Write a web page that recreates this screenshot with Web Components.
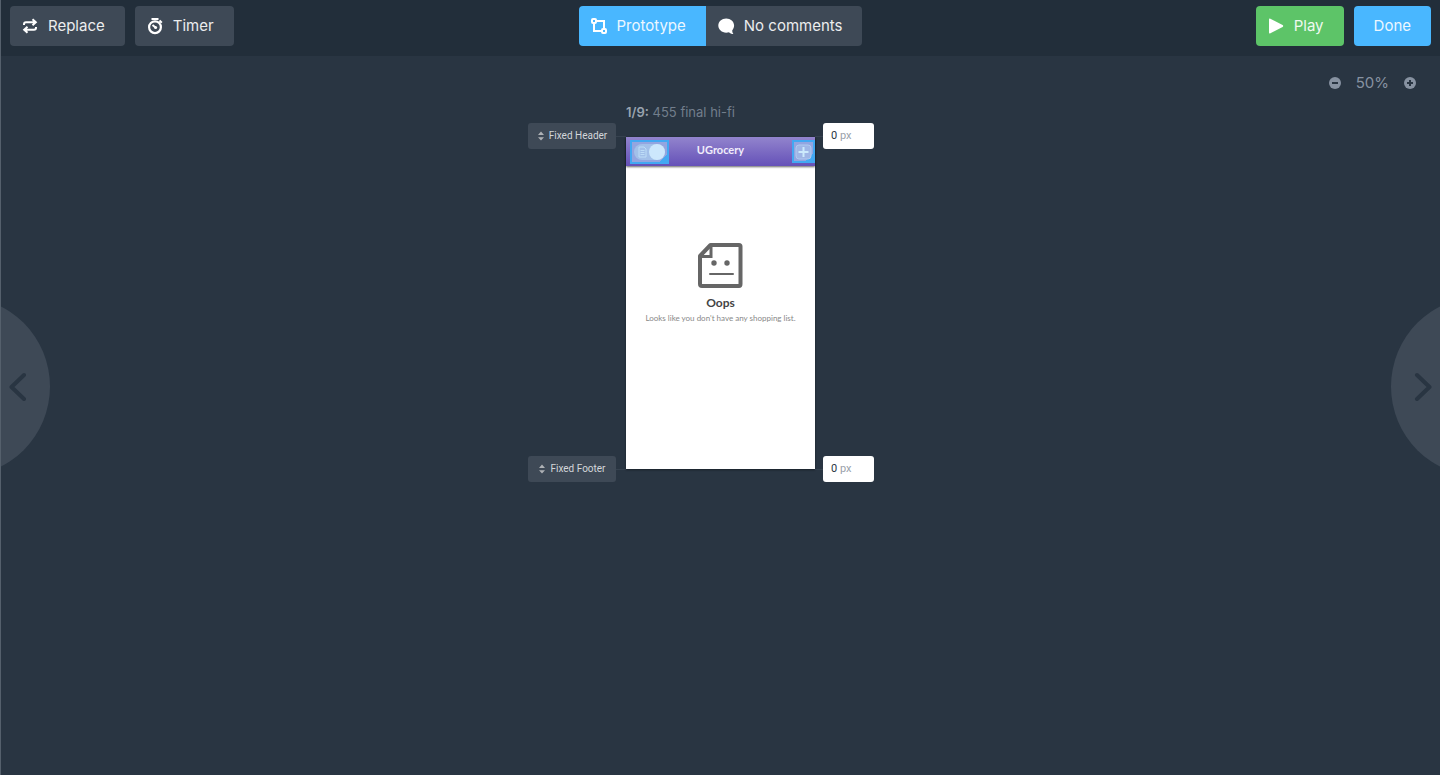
<!DOCTYPE html>
<html lang="en">
<head>
<meta charset="utf-8">
<meta name="viewport" content="width=device-width, initial-scale=1">
<title>455 final hi-fi</title>
<style>
    * { box-sizing: border-box; }
    body {
        margin: 0;
        background: #293542;
        font-family: Inter, sans-serif;
        --panel: #3e4956;
        --blue: #49b7ff;
        --green: #5dc468;
        --muted: #8792a1;
    }
</style>
</head>
<body>
<prototype-editor></prototype-editor>

<script>
const ICONS = {
    replace: '<path d="M2 7V6.2Q2 4.2 4 4.2H13M10.5 1.2L13.8 4.2L10.5 7.2M14 9V9.8Q14 11.8 12 11.8H3M5.5 8.8L2.2 11.8L5.5 14.8" fill="none" stroke="currentColor" stroke-width="2"/>',
    timer: '<circle cx="8" cy="9.2" r="5.9" fill="none" stroke="currentColor" stroke-width="2.2"/><path d="M4.5 1H11.5M12.5 2.5L14.8 4.8M5.5 7L8.5 9.5" fill="none" stroke="currentColor" stroke-width="2"/><circle cx="8.6" cy="9.6" r="1.5" fill="currentColor"/>',
    flow: '<path d="M5 3H13V11M3 5V13H11" fill="none" stroke="currentColor" stroke-width="2"/><rect x="1" y="1" width="4" height="4" rx="1" fill="none" stroke="currentColor" stroke-width="2"/><rect x="11" y="11" width="4" height="4" rx="1" fill="none" stroke="currentColor" stroke-width="2"/>',
    comment: '<path d="M8.2 0.5C3.8 0.5 0.3 3.6 0.3 7.6S3.8 14.7 8.2 14.7C9.2 14.7 10.2 14.5 11 14.2C12 15.4 13.5 16 15.4 16C14.6 15 14.3 13.8 14.2 12.4C15.4 11.1 16.1 9.4 16.1 7.6C16.1 3.6 12.6 0.5 8.2 0.5Z" fill="currentColor"/>',
    play: '<path d="M1 1.5V14.5Q1 16 2.4 15.3L14.6 9Q15.8 8 14.6 7L2.4 0.7Q1 0 1 1.5Z" fill="currentColor"/>',
    sort: '<path d="M1 6.5L5 2L9 6.5ZM1 9.5L5 14L9 9.5Z" fill="currentColor"/>'
};

const icon = (name, w = 16, box = '0 0 16 16') =>
    `<svg width="${w}" height="16" viewBox="${box}" aria-hidden="true">${ICONS[name]}</svg>`;

function define(name, render) {
    customElements.define(name, class extends HTMLElement {
        constructor() {
            super();
            this.attachShadow({ mode: 'open' });
        }

        connectedCallback() {
            this.shadowRoot.innerHTML = render(this);
        }
    });
}

define('tool-button', el => `
    <style>
        :host { display: block; }
        button {
            display: flex;
            align-items: center;
            gap: 10px;
            height: 40px;
            margin: 0;
            padding: 0 20px ${el.hasAttribute('icon') ? '0 12px' : ''};
            border: 0;
            border-radius: var(--corners, 4px);
            background: var(--fill, var(--panel));
            color: #fff;
            font: 15px/24px Inter, sans-serif;
            white-space: nowrap;
            cursor: pointer;
        }
        span { opacity: 0.9; }
        svg { flex: none; overflow: visible; }
    </style>
    <button type="button">
        ${el.hasAttribute('icon') ? icon(el.getAttribute('icon')) : ''}
        <span><slot></slot></span>
    </button>
`);

define('tool-bar', () => `
    <style>
        :host {
            display: grid;
            grid-template-columns: 1fr auto 1fr;
            padding: 6px 9px 10px;
            background: #222e3a;
        }
        div { display: flex; gap: 10px; }
        .tabs { gap: 0; }
        .end { justify-content: flex-end; }
        .proto { --fill: var(--blue); --corners: 4px 0 0 4px; }
        .comments { --corners: 0 4px 4px 0; }
        .play { --fill: var(--green); }
        .done { --fill: var(--blue); }
    </style>
    <div>
        <tool-button icon="replace">Replace</tool-button>
        <tool-button icon="timer">Timer</tool-button>
    </div>
    <div class="tabs">
        <tool-button class="proto" icon="flow">Prototype</tool-button>
        <tool-button class="comments" icon="comment">No comments</tool-button>
    </div>
    <div class="end">
        <tool-button class="play" icon="play">Play</tool-button>
        <tool-button class="done">Done</tool-button>
    </div>
`);

define('zoom-control', () => `
    <style>
        :host {
            display: flex;
            justify-content: flex-end;
            align-items: center;
            gap: 15px;
            padding: 15px 24px 7px;
            color: var(--muted);
            font-size: 15px;
            line-height: 24px;
        }
        button { display: flex; margin: 0; padding: 0; border: 0; background: none; color: inherit; cursor: pointer; }
    </style>
    <button type="button" aria-label="Zoom out">
        <svg width="12" height="12" viewBox="0 0 12 12"><circle cx="6" cy="6" r="6" fill="currentColor"/><path d="M3 6H9" stroke="#293542" stroke-width="2"/></svg>
    </button>
    <span>50%</span>
    <button type="button" aria-label="Zoom in">
        <svg width="12" height="12" viewBox="0 0 12 12"><circle cx="6" cy="6" r="6" fill="currentColor"/><path d="M3 6H9M6 3V9" stroke="#293542" stroke-width="2"/></svg>
    </button>
`);

define('fixed-handle', () => `
    <style>
        :host { display: flex; align-items: center; }
        :host::after { content: ""; width: 10px; height: 1px; background: #36424f; }
        button {
            display: flex;
            align-items: center;
            justify-content: center;
            gap: 4px;
            width: 88px;
            height: 26px;
            margin: 0;
            padding: 0;
            border: 0;
            border-radius: 3px;
            background: var(--panel);
            color: #d3d6da;
            font: 10px/16px Roboto, sans-serif;
            white-space: nowrap;
            cursor: ns-resize;
        }
        svg { color: #aeb1b5; height: 12px; }
    </style>
    <button type="button">${icon('sort', 8, '0 0 10 16')}<span><slot></slot></span></button>
`);

define('px-field', el => `
    <style>
        :host { display: flex; align-items: center; }
        :host::before { content: ""; width: 8px; height: 1px; background: #36424f; }
        label {
            display: flex;
            align-items: center;
            gap: 2px;
            box-sizing: border-box;
            width: 51px;
            height: 26px;
            padding: 0 8px;
            border-radius: 3px;
            background: #fff;
            color: #9aa1aa;
            font: 11px/16px Roboto, sans-serif;
        }
        input {
            width: 7px;
            margin: 0;
            padding: 0;
            border: 0;
            outline: 0;
            background: none;
            color: #293542;
            font: inherit;
        }
    </style>
    <label><input type="text" inputmode="numeric" value="0" aria-label="${el.getAttribute('label')}"><span>px</span></label>
`);

define('hot-spot', el => `
    <style>
        :host { display: block; }
        button {
            display: flex;
            align-items: center;
            justify-content: center;
            width: 100%;
            height: 100%;
            margin: 0;
            padding: 0;
            border: 2px solid #42a8f2;
            background: linear-gradient(135deg, transparent calc(100% - 5px), #42a8f2 calc(100% - 5px)), #93a5e0;
            cursor: pointer;
        }
        svg { flex: none; }
    </style>
    <button type="button" aria-label="${el.getAttribute('label')}"><slot></slot></button>
`);

define('app-screen', () => `
    <style>
        :host {
            display: block;
            height: 332px;
            background: #fff;
            box-shadow: 0 1px 2px rgba(0, 0, 0, 0.4);
            color: #444;
            font-family: Lato, sans-serif;
            text-align: center;
        }
        header {
            display: grid;
            grid-template-columns: 1fr auto 1fr;
            align-items: start;
            height: 29px;
            padding-top: 3px;
            box-sizing: border-box;
            background: linear-gradient(#9284cd, #6551b8);
            box-shadow: 0 1px 2px rgba(0, 0, 0, 0.6);
            color: #f1edfb;
            font-size: 11px;
            font-weight: 700;
            line-height: 20px;
        }
        .lists { width: 39px; height: 24px; margin-left: 4px; }
        .add { width: 23px; height: 23px; justify-self: end; }
        main { padding-top: 76px; }
        main svg { display: block; margin: 0 auto 6px; }
        h1 { margin: 0; font-size: 12px; line-height: 18px; font-weight: 700; }
        p { margin: 0; color: #888; font-size: 8px; line-height: 12px; white-space: nowrap; }
    </style>
    <header>
        <hot-spot class="lists" label="Toggle lists">
            <svg width="33" height="18" viewBox="0 0 33 18">
                <rect x="1" y="1" width="31" height="16" rx="8" fill="#a2c0e9"/>
                <path d="M6 4H11L13 6V14H6ZM7.5 7.5H11.5M7.5 9.5H11.5M7.5 11.5H11.5" fill="none" stroke="#bdddf7"/>
                <circle cx="24" cy="9" r="8" fill="#cce7fc"/>
            </svg>
        </hot-spot>
        <span>UGrocery</span>
        <hot-spot class="add" label="Add list">
            <svg width="17" height="16" viewBox="0 0 17 16">
                <rect x="1" y="1" width="15" height="14" rx="3" fill="#9fb6e6" stroke="#afcaf0"/>
                <path d="M8.5 3V13M3.5 8H13.5" stroke="#cceafc" stroke-width="2"/>
            </svg>
        </hot-spot>
    </header>
    <main>
        <svg width="45" height="46" viewBox="0 0 45 46" fill="none" stroke="#666">
            <path d="M12.5 3H41Q42.5 3 42.5 4.5V42Q42.5 44 41 44H4Q2 44 2 42V14Z" stroke-width="4" stroke-linejoin="round"/>
            <path d="M13 3V14.5H2" stroke-width="3"/>
            <path d="M12 32H35" stroke-width="2" stroke-linecap="round"/>
            <circle cx="16" cy="21" r="2.7" fill="#666" stroke="none"/>
            <circle cx="29" cy="21" r="2.7" fill="#666" stroke="none"/>
        </svg>
        <h1>Oops</h1>
        <p>Looks like you don't have any shopping list.</p>
    </main>
`);

define('page-arrow', el => `
    <style>
        :host { display: block; position: absolute; top: calc(50% - 91px); }
        :host([side="prev"]) { left: 0; }
        :host([side="next"]) { right: 0; transform: scaleX(-1); }
        button {
            display: flex;
            align-items: center;
            width: 50px;
            height: 180px;
            margin: 0;
            padding: 0 8px;
            border: 0;
            background: var(--panel);
            clip-path: circle(90px at -41px 50%);
            cursor: pointer;
        }
    </style>
    <button type="button" aria-label="${el.getAttribute('side') === 'prev' ? 'Previous screen' : 'Next screen'}">
        <svg width="18" height="30" viewBox="0 0 18 30"><path d="M15 3L2.5 15L15 27" fill="none" stroke="#293542" stroke-width="4" stroke-linecap="round" stroke-linejoin="round"/></svg>
    </button>
`);

define('proto-stage', () => `
    <style>
        :host {
            display: grid;
            grid-template-columns: 1fr 189px 1fr;
        }
        h2 {
            grid-column: 2;
            margin: 0 0 15px;
            color: #727e8c;
            font-size: 13px;
            line-height: 20px;
            font-weight: 400;
            white-space: nowrap;
        }
        strong { color: #9aa4b0; font-weight: 600; }
        /* handles are centred on the top and bottom edges of the screen */
        .rail {
            display: flex;
            flex-direction: column;
            justify-content: space-between;
            margin: -14px 0 -13px;
        }
        .start { grid-column: 1; align-items: flex-end; }
    </style>
    <h2><strong>1/9:</strong> 455 final hi-fi</h2>
    <div class="rail start">
        <fixed-handle>Fixed Header</fixed-handle>
        <fixed-handle>Fixed Footer</fixed-handle>
    </div>
    <app-screen></app-screen>
    <div class="rail">
        <px-field label="Fixed header height"></px-field>
        <px-field label="Fixed footer height"></px-field>
    </div>
`);

define('prototype-editor', () => `
    <style>
        :host {
            display: block;
            position: relative;
            box-sizing: border-box;
            min-height: 100vh;
            border-left: 1px solid #55606c;
        }
    </style>
    <tool-bar></tool-bar>
    <zoom-control></zoom-control>
    <proto-stage></proto-stage>
    <page-arrow side="prev"></page-arrow>
    <page-arrow side="next"></page-arrow>
`);
</script>
</body>
</html>
